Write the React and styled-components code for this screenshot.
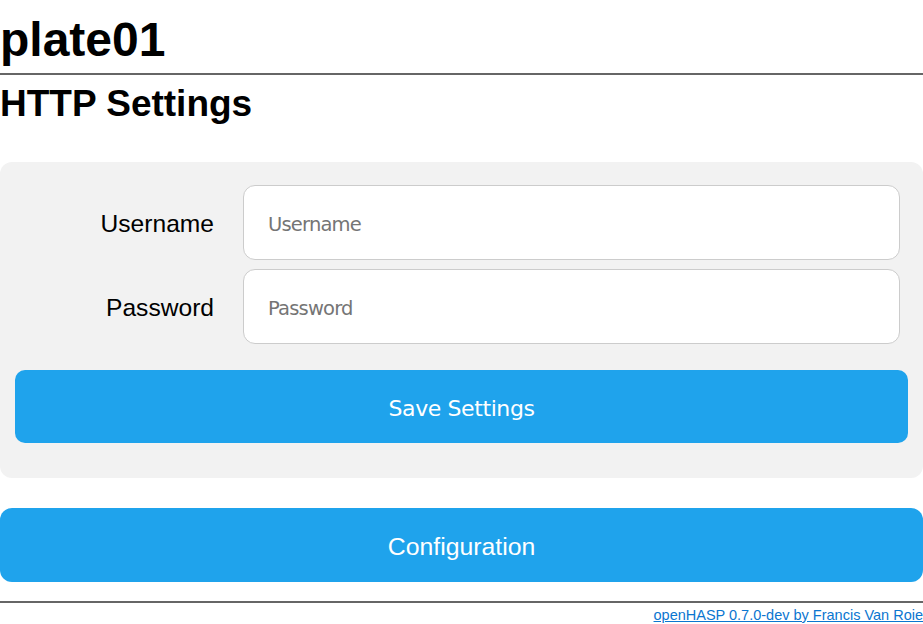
import React from "react";
import styled, { createGlobalStyle } from "styled-components";

const GlobalStyle = createGlobalStyle`
  html, body {
    margin: 0;
    padding: 0;
    background: #fff;
    color: #000;
    font-family: "Liberation Sans", Arial, sans-serif;
  }
`;

const Page = styled.div`
  width: 923px;
  display: flex;
  flex-direction: column;
`;

const Title = styled.h1`
  margin: 0;
  padding-top: 12px;
  font-size: 48px;
  line-height: 56px;
  font-weight: bold;
  height: 61px;
`;

const Rule = styled.hr`
  margin: 0;
  border: 0;
  border-top: 2px solid #666;
  height: 0;
`;

const SubTitle = styled.h2`
  margin: 0;
  padding-top: 3px;
  font-size: 37px;
  line-height: 52px;
  font-weight: bold;
  height: 84px;
`;

const Panel = styled.form`
  background: #f2f2f2;
  border-radius: 12px;
  padding: 23px 15px 35px;
  display: flex;
  flex-direction: column;
  gap: 26px;
`;

const Fields = styled.div`
  display: grid;
  grid-template-columns: 199px 1fr;
  column-gap: 29px;
  row-gap: 9px;
  padding-right: 8px;
`;

const Label = styled.label`
  display: flex;
  align-items: center;
  justify-content: flex-end;
  font-size: 24.6px;
  padding-top: 2px;
`;

const Input = styled.input`
  box-sizing: border-box;
  height: 75px;
  width: 100%;
  border: 1px solid #cccccc;
  border-radius: 12px;
  background: #fff;
  padding: 3px 24px 0;
  font-family: "DejaVu Sans", Tahoma, sans-serif;
  font-size: 19.5px;
  letter-spacing: -0.8px;
  outline: none;
  &::placeholder {
    color: #757575;
  }
`;

const Button = styled.button`
  box-sizing: border-box;
  height: ${(p) => (p.$wide ? "74px" : "73px")};
  width: 100%;
  border: 0;
  border-radius: ${(p) => (p.$wide ? "12px" : "10px")};
  background: #1fa3ec;
  color: #fff;
  cursor: pointer;
  font-family: ${(p) =>
    p.$wide ? '"Liberation Sans", Arial, sans-serif' : '"DejaVu Sans", Tahoma, sans-serif'};
  font-size: ${(p) => (p.$wide ? "24.8px" : "22px")};
  letter-spacing: ${(p) => (p.$wide ? "0" : "-0.4px")};
  padding: 3px 0 0;
`;

const Spacer = styled.div`
  height: ${(p) => p.$h}px;
`;

const Footer = styled.div`
  text-align: right;
  font-size: 14.5px;
  line-height: 20px;
  padding-top: 2px;
  white-space: nowrap;
  overflow: hidden;
`;

const Link = styled.a`
  color: #0b76d0;
  text-decoration: underline;
`;

export default function App() {
  return (
    <Page>
      <GlobalStyle />
      <Title>plate01</Title>
      <Rule />
      <SubTitle>HTTP Settings</SubTitle>
      <Panel onSubmit={(e) => e.preventDefault()}>
        <Fields>
          <Label htmlFor="user">Username</Label>
          <Input id="user" placeholder="Username" />
          <Label htmlFor="pass">Password</Label>
          <Input id="pass" type="password" placeholder="Password" />
        </Fields>
        <Button type="submit">Save Settings</Button>
      </Panel>
      <Spacer $h={30} />
      <Button $wide>Configuration</Button>
      <Spacer $h={19} />
      <Rule />
      <Footer>
        <Link href="#">openHASP 0.7.0-dev by Francis Van Roie</Link>
      </Footer>
    </Page>
  );
}
